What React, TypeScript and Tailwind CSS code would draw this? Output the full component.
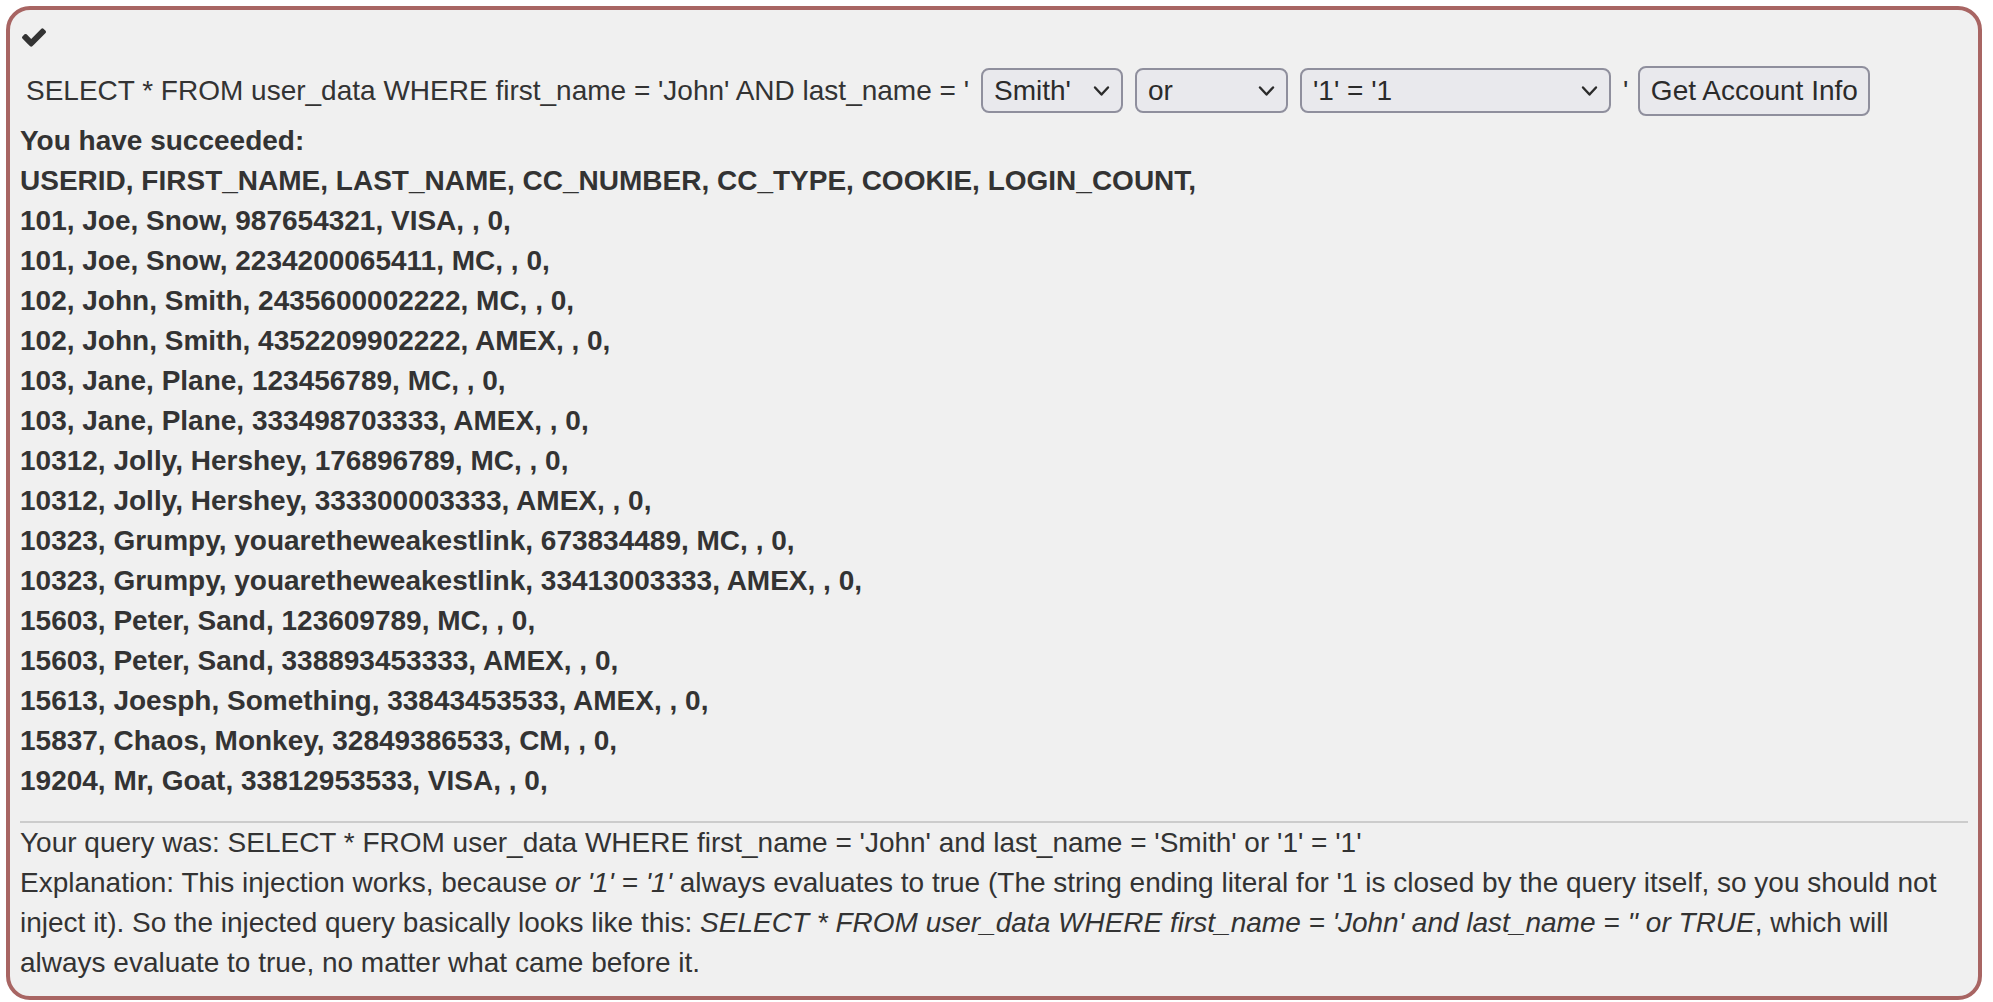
import React from 'react';

const rows = [
  'USERID, FIRST_NAME, LAST_NAME, CC_NUMBER, CC_TYPE, COOKIE, LOGIN_COUNT,',
  '101, Joe, Snow, 987654321, VISA, , 0,',
  '101, Joe, Snow, 2234200065411, MC, , 0,',
  '102, John, Smith, 2435600002222, MC, , 0,',
  '102, John, Smith, 4352209902222, AMEX, , 0,',
  '103, Jane, Plane, 123456789, MC, , 0,',
  '103, Jane, Plane, 333498703333, AMEX, , 0,',
  '10312, Jolly, Hershey, 176896789, MC, , 0,',
  '10312, Jolly, Hershey, 333300003333, AMEX, , 0,',
  '10323, Grumpy, youaretheweakestlink, 673834489, MC, , 0,',
  '10323, Grumpy, youaretheweakestlink, 33413003333, AMEX, , 0,',
  '15603, Peter, Sand, 123609789, MC, , 0,',
  '15603, Peter, Sand, 338893453333, AMEX, , 0,',
  '15613, Joesph, Something, 33843453533, AMEX, , 0,',
  '15837, Chaos, Monkey, 32849386533, CM, , 0,',
  '19204, Mr, Goat, 33812953533, VISA, , 0,',
];

const Chevron = () => (
  <svg width="17" height="11" viewBox="0 0 17 11" className="pointer-events-none absolute right-[13px] top-1/2 -translate-y-1/2">
    <polyline points="2,2 8.5,9 15,2" fill="none" stroke="#2b2b2b" strokeWidth="2.4" strokeLinecap="round" strokeLinejoin="round" />
  </svg>
);

function FakeSelect({ width, value, options }: { width: string; value: string; options: string[] }) {
  return (
    <div className={`relative ${width} h-[45px]`}>
      <select
        defaultValue={value}
        className="h-full w-full appearance-none rounded-[8px] border-2 border-[#8f8f9d] bg-[#e9e9ed] pl-[11px] pr-[36px] text-[28px] leading-[40px] text-[#2b2b2b] outline-none"
      >
        {options.map((o) => (
          <option key={o} value={o}>{o}</option>
        ))}
      </select>
      <Chevron />
    </div>
  );
}

export default function App() {
  return (
    <div className="min-h-screen bg-white pl-[6px] pt-[6px] font-['Liberation_Sans',Arial,sans-serif] text-[28px] leading-[40px] text-[#333333]">
      <div className="w-[1976px] rounded-[24px] border-4 border-[#a86563] bg-[#f0f0f0] px-[10px] pb-[13px] pt-[10px]">
        {/* check icon */}
        <div className="h-[40px] pt-[8px] pl-[2px]">
          <svg width="24" height="19" viewBox="121 334 1550 1188" fill="#333333">
            <path d="M1671 566q0 40-28 68l-724 724-136 136q-28 28-68 28t-68-28l-136-136-362-362q-28-28-28-68t28-68l136-136q28-28 68-28t68 28l294 295 656-657q28-28 68-28t68 28l136 136q28 28 28 68z" />
          </svg>
        </div>

        {/* query form */}
        <div className="flex h-[61px] items-center pl-[6px]">
          <span className="whitespace-pre">SELECT * FROM user_data WHERE first_name = 'John' AND last_name = '</span>
          <div className="ml-[12px]">
            <FakeSelect width="w-[142px]" value="Smith'" options={["Smith'", "Snow'", "'"]} />
          </div>
          <div className="ml-[12px]">
            <FakeSelect width="w-[153px]" value="or" options={['or', 'and']} />
          </div>
          <div className="ml-[12px]">
            <FakeSelect width="w-[311px]" value="'1' = '1" options={["'1' = '1", "'1' = '2"]} />
          </div>
          <span className="ml-[12px]">'</span>
          <button className="ml-[10px] h-[50px] w-[232px] rounded-[8px] border-2 border-[#8f8f9d] bg-[#e9e9ed] text-[28px] leading-[40px] text-[#2b2b2b]">
            Get Account Info
          </button>
        </div>

        {/* results */}
        <div className="font-bold">
          <div>You have succeeded:</div>
          {rows.map((r, i) => (
            <div key={i}>{r}</div>
          ))}
        </div>

        <hr className="mt-[20px] border-t-2 border-[#cccccc]" />

        <div>
          <div>Your query was: SELECT * FROM user_data WHERE first_name = 'John' and last_name = 'Smith' or '1' = '1'</div>
          <div>
            Explanation: This injection works, because <i>or '1' = '1'</i> always evaluates to true (The string ending literal for '1 is closed by the query itself, so you should not inject it). So the injected query basically looks like this: <i>SELECT * FROM user_data WHERE first_name = 'John' and last_name = '' or TRUE</i>, which will always evaluate to true, no matter what came before it.
          </div>
        </div>
      </div>
    </div>
  );
}
